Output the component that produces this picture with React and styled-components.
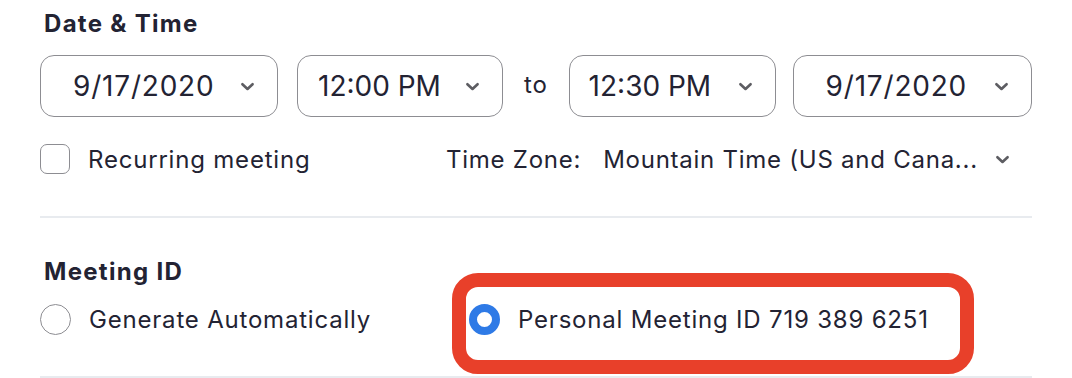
import React from "react";
import styled, { createGlobalStyle } from "styled-components";

const GlobalStyle = createGlobalStyle`
  html, body { margin: 0; padding: 0; background: #ffffff; }
  body { font-family: Inter, "Noto Sans", "Liberation Sans", sans-serif; color: #232333; }
`;

const Page = styled.div`
  width: 1072px;
  height: 378px;
  box-sizing: border-box;
  padding-left: 40px;
  overflow: hidden;
  background: #fff;
`;

const Content = styled.div`
  width: 992px;
  display: flex;
  flex-direction: column;
`;

const Title = styled.div`
  font-size: 24px;
  line-height: 24px;
  font-weight: 700;
  letter-spacing: 1.3px;
  color: #232333;
  padding-left: 4px;
  margin-top: ${(p) => p.$top}px;
`;

const SelectRow = styled.div`
  display: flex;
  align-items: center;
  margin-top: 19px;
`;

const Select = styled.div`
  box-sizing: border-box;
  width: ${(p) => p.$w}px;
  height: 62px;
  margin-right: ${(p) => p.$gap || 0}px;
  border: 1.5px solid #8d8d92;
  border-radius: 14px;
  display: flex;
  align-items: center;
  justify-content: space-between;
  padding-left: ${(p) => p.$pl}px;
  padding-right: 22px;
  font-size: 28px;
  letter-spacing: ${(p) => (p.$date ? "0.8px" : "0")};
  color: #232333;
`;

const ToLabel = styled.span`
  font-size: 24px;
  letter-spacing: 0.8px;
  color: #232333;
  margin: 0 21px 4px 21px;
`;

const ChevronSvg = styled.svg`
  width: 15px;
  height: 9px;
  flex: none;
  margin-left: ${(p) => p.$ml || 0}px;
`;

const Chevron = ({ ml }) => (
  <ChevronSvg viewBox="0 0 15 9" $ml={ml}>
    <path d="M2.4 2.2 L7.5 7 L12.6 2.2" fill="none" stroke="#5d5d62" strokeWidth="2.6" strokeLinecap="round" strokeLinejoin="round" />
  </ChevronSvg>
);

const OptionsRow = styled.div`
  display: flex;
  align-items: center;
  margin-top: 27px;
  height: 30px;
`;

const Option = styled.label`
  display: flex;
  align-items: center;
  gap: 18px;
  font-size: 24px;
  letter-spacing: 0.8px;
  color: #232333;
  width: ${(p) => (p.$w ? `${p.$w}px` : "auto")};
  flex: none;
  position: relative;
`;

const Checkbox = styled.span`
  box-sizing: border-box;
  width: 30px;
  height: 30px;
  border: 1.5px solid #8d8d92;
  border-radius: 7px;
  flex: none;
`;

const Radio = styled.span`
  box-sizing: border-box;
  width: 31px;
  height: 31px;
  border-radius: 50%;
  flex: none;
  border: ${(p) => (p.$checked ? "8.5px solid #2e7ae6" : "1.5px solid #8d8d92")};
  background: #fff;
`;

const TimeZone = styled.div`
  display: flex;
  align-items: center;
  font-size: 24px;
  letter-spacing: 0.75px;
  color: #232333;
`;

const TzLabel = styled.span`
  margin-right: 22px;
`;

const Divider = styled.div`
  height: 2px;
  background: #e8ebef;
  margin-top: ${(p) => p.$top}px;
`;

const RadioRow = styled.div`
  display: flex;
  align-items: center;
  margin-top: 20px;
  height: 31px;
`;

const Highlight = styled.span`
  position: absolute;
  left: -17px;
  top: -31px;
  width: 522px;
  height: 101px;
  box-sizing: border-box;
  border: 14.5px solid #e8402a;
  border-radius: 26px;
  pointer-events: none;
`;

export default function App() {
  return (
    <>
      <GlobalStyle />
      <Page>
        <Content>
          <Title $top={12}>Date &amp; Time</Title>
          <SelectRow>
            <Select $w={238} $pl={32} $gap={19} $date>
              <span>9/17/2020</span>
              <Chevron />
            </Select>
            <Select $w={206} $pl={20}>
              <span>12:00 PM</span>
              <Chevron />
            </Select>
            <ToLabel>to</ToLabel>
            <Select $w={207} $pl={19} $gap={17}>
              <span>12:30 PM</span>
              <Chevron />
            </Select>
            <Select $w={239} $pl={32} $date>
              <span>9/17/2020</span>
              <Chevron />
            </Select>
          </SelectRow>
          <OptionsRow>
            <Option $w={406}>
              <Checkbox />
              Recurring meeting
            </Option>
            <TimeZone>
              <TzLabel>Time Zone:</TzLabel>
              <span>Mountain Time (US and Cana...</span>
              <Chevron ml={17} />
            </TimeZone>
          </OptionsRow>
          <Divider $top={42} />
          <Title $top={42}>Meeting ID</Title>
          <RadioRow>
            <Option $w={429}>
              <Radio />
              Generate Automatically
            </Option>
            <Option>
              <Radio $checked />
              Personal Meeting ID 719 389 6251
              <Highlight />
            </Option>
          </RadioRow>
          <Divider $top={41} />
        </Content>
      </Page>
    </>
  );
}
